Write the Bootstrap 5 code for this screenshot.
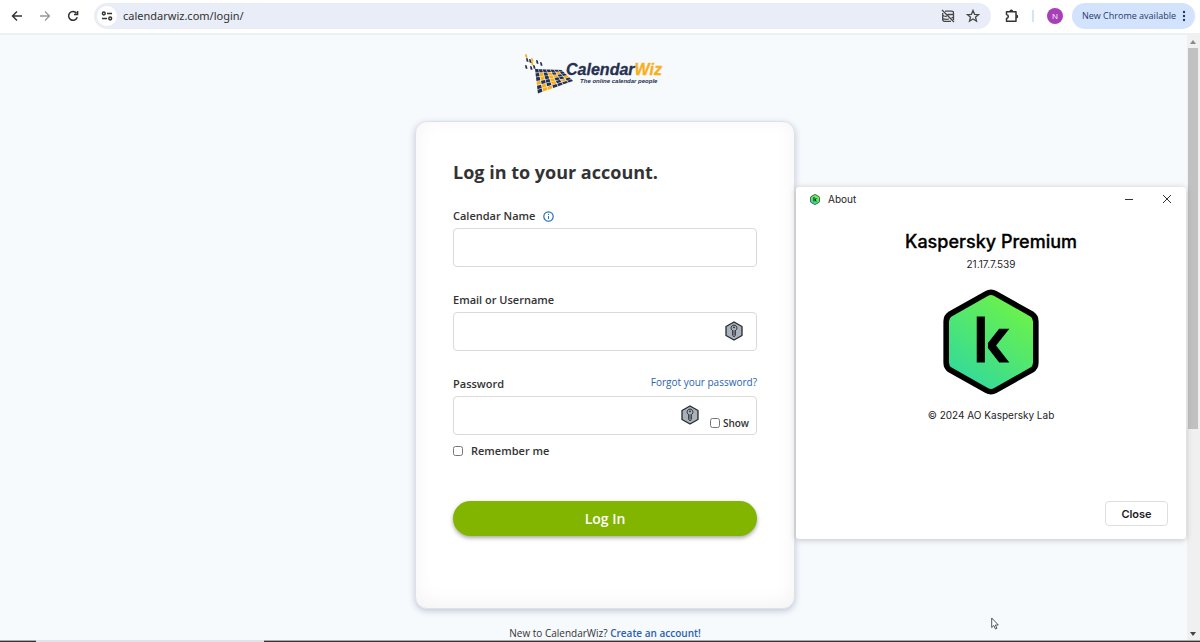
<!DOCTYPE html>
<html lang="en">
<head>
<meta charset="utf-8">
<meta name="viewport" content="width=device-width, initial-scale=1">
<title>CalendarWiz Login</title>
<link href="https://cdn.jsdelivr.net/npm/bootstrap@5.3.0/dist/css/bootstrap.min.css" rel="stylesheet">
<style>
  body { font-family: "Open Sans", "Noto Sans", sans-serif; font-size: 11px; line-height: 16px; color: #333; background: #f6fafd; }
  svg { display: block; flex: none; }
  .plain-btn { border: 0; background: none; padding: 0; color: #474747; }

  /* browser toolbar */
  .toolbar { height: 35px; padding: 0 5px 2px 9px; border-bottom: 2px solid #eef1f4; background: #fff; }
  .nav-buttons { gap: 12px; }
  .omnibox { height: 26px; margin-left: 13px; padding: 0 10px 0 3px; gap: 9px; background: #e9edf7; border-radius: 13px; }
  .site-info { width: 20px; height: 20px; background: #fff; border-radius: 50%; }
  .omnibox input { border: 0; background: none; outline: 0; padding: 0; margin-left: -3px; min-width: 0; font: 11px/16px "Noto Sans", sans-serif; color: #333; }
  .toolbar-end { gap: 13px; margin: 0 9px 0 14px; }
  .divider { width: 2px; height: 12px; background: #d3e3fd; }
  .avatar { width: 16px; height: 16px; border-radius: 50%; background: #a73fb8; color: #fff; font-size: 8px; }
  .update-pill { height: 26px; padding: 0 8px 0 10px; gap: 5px; border-radius: 13px; background: #d3e3fd; color: #1f3b68; font-size: 9px; }

  /* page */
  .page-area { min-height: 0; }
  .login-page { padding-top: 18px; }
  .brand { height: 42px; margin-bottom: 26px; }
  .brand-words { margin: 8px 0 0 -8px; font-family: "Liberation Sans", sans-serif; font-style: italic; font-weight: 700; color: #26304f; }
  .brand-name { font-size: 16px; line-height: 17px; -webkit-text-stroke: 0.3px; }
  .brand-name span { color: #fbae17; }
  .brand-tag { font-size: 6px; line-height: 7px; padding-left: 14px; }
  .login-column { width: 380px; margin-left: 23px; }
  .login-card { padding: 38px 37px 72px; border: 1px solid #dfe1e8; border-radius: 12px; background: #fff; box-shadow: 0 2px 6px rgba(70,80,120,.3), inset 0 -4px 20px rgba(0,0,0,.05); }
  h1 { font-size: 18px; line-height: 24px; font-weight: 700; margin-bottom: 24px; }
  .field { margin-bottom: 25px; }
  .field-label, .remember { font-weight: 600; }
  .text-box { height: 39px; border: 1px solid #d9d9d9; border-radius: 4px; padding: 0 12px; font-size: 12px; }
  a { color: #2a62ad; text-decoration: none; font-weight: 500; }
  .small-text { font-size: 10px; line-height: 12px; }
  .in-box { right: 14px; top: 9px; }
  .pw-tools { right: 8px; top: 9px; gap: 11px; }
  .pw-tools label { gap: 3px; padding-top: 10px; font-size: 10px; font-weight: 600; line-height: 16px; }
  input[type=checkbox] { width: 10px; height: 10px; margin: 0; }
  .login-btn { height: 35px; margin-top: 42px; border: 0; border-radius: 18px; background: #82b500; color: #fff; font-size: 14px; font-weight: 600; box-shadow: 0 2px 4px rgba(0,0,0,.35); }
  .signup { margin-top: 16px; font-size: 10px; }
  .signup a { font-weight: 600; }

  /* scrollbar and taskbar */
  .scroll-track { width: 13px; padding: 5px 2px 4px 1px; background: #f0f0f0; }
  .scroll-thumb { flex: 0 1 64%; width: 10px; margin-top: 4px; background: #c1c1c1; }
  .taskbar { height: 2px; background: #333; border-top: 1px solid #aaa; }
  .taskbar div { width: 19%; height: 2px; margin: -1px 0 0 3%; background: #dfe4e8; }

  /* about window */
  .about { right: 14px; top: 187px; width: 390px; height: 352px; background: #fff; border-radius: 3px; box-shadow: 0 1px 6px rgba(0,0,0,.22); font-family: Inter, Roboto, sans-serif; color: #1d1d1f; }
  .about-bar { padding: 4px 14px 0; font-size: 10px; line-height: 16px; }
  .about h2 { font-size: 18px; line-height: 24px; font-weight: 500; color: #000; margin: 23px 0 2px; -webkit-text-stroke: 0.3px; }
  .about p { font-size: 10px; line-height: 16px; margin: 0; }
  .about-logo { margin: 16px 0 11px; }
  .close-btn { width: 63px; height: 25px; border: 1px solid #dcdfe2; border-radius: 4px; background: #fff; font-size: 11px; font-weight: 600; color: #1d1d1f; margin: 0 18px 13px; }
  .pointer { right: 201px; bottom: 12px; }
</style>
</head>
<body>
<svg width="0" height="0" class="position-absolute" aria-hidden="true">
  <defs>
    <linearGradient id="green" x1="0.2" y1="1" x2="0.85" y2="0"><stop offset="0" stop-color="#2fd8a0"/><stop offset="1" stop-color="#73f540"/></linearGradient>
    <symbol id="kas" viewBox="0 0 96 106">
      <path d="M43.500 5.500 Q48 2.800 52.500 5.500 L88 25.500 Q92 28 92 33 V73 Q92 78 88 80.500 L52.500 100.500 Q48 103.200 43.500 100.500 L8 80.500 Q4 78 4 73 V33 Q4 28 8 25.500 Z" fill="url(#green)" stroke="#000" stroke-width="5.500" stroke-linejoin="round"/>
      <path d="M34 28h8v45h-8zM56 40h10L53 56.500 66 73H56L45 59v-5z" fill="#000"/>
    </symbol>
    <symbol id="key" viewBox="0 0 18 20">
      <path d="M9 1 L17 5.500 V14.500 L9 19 L1 14.500 V5.500 Z" fill="#a9b1ba" stroke="#25292e" stroke-width="1.300" stroke-linejoin="round"/>
      <path d="M7.700 9.600a2.900 2.900 0 1 1 2.600 0v4.900L9 15.700l-1.300-1.200z" fill="#a9b1ba" stroke="#25292e" stroke-width="1"/>
      <circle cx="9" cy="6.300" r=".9" fill="#25292e"/><path d="M9 9v5" stroke="#25292e" stroke-width=".6"/>
    </symbol>
  </defs>
</svg>

<div class="d-flex flex-column vh-100 overflow-hidden position-relative">
  <header class="toolbar d-flex align-items-center flex-shrink-0">
    <div class="nav-buttons d-flex">
      <button class="plain-btn" aria-label="Back"><svg width="16" height="16" viewBox="0 0 16 16" fill="none" stroke="#333" stroke-width="1.500"><path d="M13 8H4M8 3.500 3.500 8 8 12.500"/></svg></button>
      <button class="plain-btn" aria-label="Forward"><svg width="16" height="16" viewBox="0 0 16 16" fill="none" stroke="#999" stroke-width="1.300"><path d="M3 8h9M8 3.500 12.500 8 8 12.500"/></svg></button>
      <button class="plain-btn" aria-label="Reload"><svg width="16" height="16" viewBox="0 0 16 16" fill="none" stroke="#333" stroke-width="1.500"><path d="M12.200 9.300A4.400 4.400 0 1 1 11.500 5.200M12.600 3v3.500H9"/></svg></button>
    </div>
    <div class="omnibox d-flex align-items-center flex-grow-1">
      <button class="plain-btn site-info d-flex align-items-center justify-content-center" aria-label="Site information"><svg width="12" height="10" viewBox="0 0 12 10" fill="none" stroke="#333" stroke-width="1.500"><circle cx="2.800" cy="2.500" r="1.400"/><path d="M6 2.500h5M1 7.500h5"/><circle cx="9.200" cy="7.500" r="1.400"/></svg></button>
      <input class="flex-grow-1" type="text" value="calendarwiz.com/login/" aria-label="Address">
      <button class="plain-btn" aria-label="Cookies blocked"><svg width="16" height="16" viewBox="0 0 16 16" fill="none" stroke="#474747" stroke-width="1.300"><path d="M5 3.200h6.500q2 0 2 1.800v7M11 13.300H4.500q-1.800 0-1.800-1.800V5M7.500 6.500H13.500M2.700 7q1 1.500 4 1.500M2.700 10.500q3 1.500 6.300 .5M11.500 9.800q1.500-.3 2-1M2 2l12 12"/></svg></button>
      <button class="plain-btn" aria-label="Bookmark"><svg width="16" height="16" viewBox="0 0 16 16" fill="none" stroke="#474747" stroke-width="1.300"><path d="M8 2.500 9.600 6.300l4 .3-3.100 2.600 1 4L8 11l-3.500 2.200 1-4-3.100-2.600 4-.3z"/></svg></button>
    </div>
    <div class="toolbar-end d-flex align-items-center">
      <button class="plain-btn" aria-label="Extensions"><svg width="14" height="14" viewBox="0 0 14 14"><path d="M1.500 2.700H11V12.300H1.500V9.400q1.800-.3 1.800-1.900T1.500 5.600z" fill="none" stroke="#333" stroke-width="1.500" stroke-linejoin="round"/><path d="M4.400 2.200a1.900 1.700 0 0 1 3.800 0zM11.300 5.600a1.900 1.900 0 0 1 0 3.800z" fill="#333"/></svg></button>
      <span class="divider"></span>
      <button class="plain-btn avatar d-flex align-items-center justify-content-center" aria-label="Profile">N</button>
    </div>
    <button class="plain-btn update-pill d-flex align-items-center text-nowrap">New Chrome available
      <svg width="6" height="14" viewBox="0 0 6 14" fill="#1f3b68"><circle cx="3" cy="3" r="1.200"/><circle cx="3" cy="7" r="1.200"/><circle cx="3" cy="11" r="1.200"/></svg>
    </button>
  </header>

  <div class="page-area d-flex flex-grow-1">
    <main class="login-page flex-grow-1 d-flex flex-column align-items-center overflow-hidden">
      <div class="brand d-flex flex-shrink-0">
        <svg id="mesh" width="49" height="42" viewBox="0 0 49 42" role="img" aria-label="CalendarWiz"></svg>
        <div class="brand-words text-nowrap">
          <div class="brand-name">Calendar<span>Wiz</span></div>
          <div class="brand-tag">The online calendar people</div>
        </div>
      </div>
      <div class="login-column flex-shrink-0">
        <form class="login-card">
          <h1>Log in to your account.</h1>
          <div class="field">
            <div class="d-flex align-items-center gap-2 mb-1">
              <label class="field-label" for="cal">Calendar Name</label>
              <svg width="11" height="11" viewBox="0 0 11 11" fill="none" stroke="#2a6fbf"><circle cx="5.500" cy="5.500" r="4.700" stroke-width="1.200"/><path d="M5.500 5v3M5.500 2.800v1.200"/></svg>
            </div>
            <input class="text-box form-control" id="cal" type="text">
          </div>
          <div class="field">
            <label class="field-label d-block mb-1" for="user">Email or Username</label>
            <div class="position-relative">
              <input class="text-box form-control" id="user" type="text">
              <svg class="in-box position-absolute" width="18" height="20"><use href="#key"/></svg>
            </div>
          </div>
          <div>
            <div class="d-flex justify-content-between align-items-start mb-1">
              <label class="field-label" for="pass">Password</label>
              <a class="small-text" href="#">Forgot your password?</a>
            </div>
            <div class="position-relative">
              <input class="text-box form-control" id="pass" type="password">
              <div class="pw-tools position-absolute d-flex align-items-start">
                <svg width="18" height="20"><use href="#key"/></svg>
                <label class="d-flex align-items-center"><input type="checkbox">Show</label>
              </div>
            </div>
          </div>
          <label class="remember d-flex align-items-center mt-2"><input type="checkbox" class="me-2">Remember me</label>
          <button class="login-btn w-100 d-block" type="button">Log In</button>
        </form>
        <div class="signup text-center">New to CalendarWiz? <a href="#">Create an account!</a></div>
      </div>
    </main>
    <div class="scroll-track d-flex flex-column align-items-center flex-shrink-0" aria-hidden="true">
      <svg width="6" height="4" viewBox="0 0 6 4"><path d="M0 4 3 0l3 4z" fill="#8a8a8a"/></svg>
      <div class="scroll-thumb"></div>
      <svg class="mt-auto" width="6" height="4" viewBox="0 0 6 4"><path d="M0 0h6L3 4z" fill="#444"/></svg>
    </div>
  </div>
  <div class="taskbar flex-shrink-0"><div></div></div>

  <section class="about position-absolute d-flex flex-column" aria-label="About">
    <div class="about-bar d-flex align-items-center">
      <svg class="me-2" width="10" height="11"><use href="#kas"/></svg>About
      <button class="plain-btn ms-auto" aria-label="Minimize"><svg width="10" height="10" viewBox="0 0 10 10"><path d="M1 5.500h8" stroke="#333"/></svg></button>
      <button class="plain-btn ms-4" aria-label="Close window"><svg class="ms-1" width="10" height="10" viewBox="0 0 10 10"><path d="m1 1 8 8M9 1 1 9" stroke="#333"/></svg></button>
    </div>
    <div class="d-flex flex-column align-items-center">
      <h2>Kaspersky Premium</h2>
      <p>21.17.7.539</p>
      <svg class="about-logo" width="98" height="108"><use href="#kas"/></svg>
      <p>© 2024 AO Kaspersky Lab</p>
    </div>
    <button class="close-btn align-self-end mt-auto">Close</button>
  </section>

  <svg class="pointer position-absolute" width="8" height="13" viewBox="0 0 8 13"><path d="M.7 1v9.500l2.200-2 1.500 3.500 1.500-.7-1.500-3.300h2.900z" fill="#fff" stroke="#444" stroke-width=".9"/></svg>
</div>

<script src="https://cdn.jsdelivr.net/npm/bootstrap@5.3.0/dist/js/bootstrap.bundle.min.js"></script>
<script>
  // Checkered calendar sheet in perspective, with loose tiles flying off its corner
  const navy = '#26304f', gold = '#fbae17';
  const mesh = document.getElementById('mesh');
  const tile = (pts, fill) => {
    const p = document.createElementNS('http://www.w3.org/2000/svg', 'polygon');
    p.setAttribute('points', pts.map(q => q.join(',')).join(' '));
    p.setAttribute('fill', fill);
    mesh.append(p);
  };
  const tl = [10, 16], tr = [37, 17], br = [49, 28], bl = [13, 41];
  const at = (u, v) => [0, 1].map(i => (tl[i] * (1 - u) + tr[i] * u) * (1 - v) + (bl[i] * (1 - u) + br[i] * u) * v);
  const rows = ['nnnnnnn', 'ngngngn', 'ngnggnn', 'gnngnng', 'ngngngn', 'nggnnnn'];
  rows.forEach((row, r) => [...row].forEach((c, k) => {
    const u = k / 7, v = r / 6, a = 0.124, b = 0.144;
    tile([at(u, v), at(u + a, v), at(u + a, v + b), at(u, v + b)], c === 'g' ? gold : navy);
  }));
  [[0,1,gold],[1,5,navy],[6,5,gold],[11,7,navy],[0,12,navy],[6,8.5,gold],[8,12,navy],[5,13,navy],[4,6,navy],[15,9,navy]]
    .forEach(([x, y, f]) => tile([[x, y], [x + 1.8, y + 0.6], [x + 2.5, y + 4], [x + 0.6, y + 3.4]], f));
</script>
</body>
</html>
